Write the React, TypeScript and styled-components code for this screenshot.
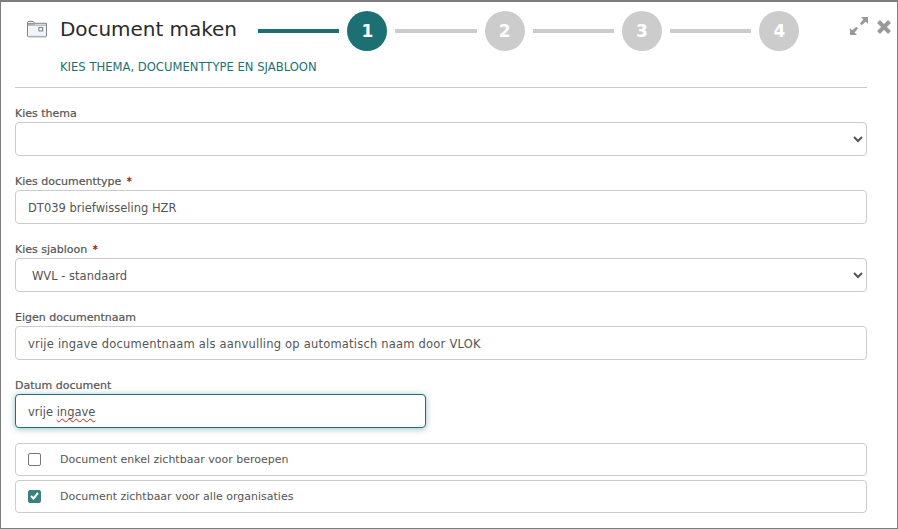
import * as React from "react";
import styled, { createGlobalStyle } from "styled-components";

const GlobalStyle = createGlobalStyle`
  html, body {
    margin: 0;
    padding: 0;
    background: #fff;
  }

  body {
    font-family: "DejaVu Sans", Verdana, sans-serif;
    color: #333;
  }
`;

const Panel = styled.div`
  box-sizing: border-box;
  width: 898px;
  height: 529px;
  padding: 0 30px 0 14px;
  border: 1px solid #7d7d7d;
  border-top-width: 2px;
  background: #fff;
  position: relative;
`;

const Header = styled.header`
  height: 85px;
  border-bottom: 1px solid #ccc;
  box-sizing: content-box;
`;

const TitleRow = styled.div`
  display: flex;
  align-items: flex-start;
  padding: 9px 0 0 12px;
`;

const FolderIcon = styled.svg`
  width: 20px;
  height: 18px;
  margin: 9px 13px 0 0;
  flex: none;
`;

const Title = styled.h1`
  width: 198px;
  margin: 3px 0 0;
  font-size: 20px;
  letter-spacing: -0.05px;
  line-height: 30px;
  font-weight: 400;
  color: #2b2b2b;
  white-space: nowrap;
`;

const Stepper = styled.div`
  display: flex;
  align-items: center;
  gap: 8px;
`;

const StepLine = styled.div<{ $active?: boolean }>`
  width: 81.33px;
  height: 4px;
  background: ${(p) => (p.$active ? "#1c7074" : "#ccc")};
`;

const StepCircle = styled.div<{ $active?: boolean }>`
  width: 40px;
  height: 40px;
  border-radius: 50%;
  display: flex;
  align-items: center;
  justify-content: center;
  background: ${(p) => (p.$active ? "#1c7074" : "#ccc")};
  color: #fff;
  font-size: 17px;
  font-weight: 700;
`;

const Subtitle = styled.div`
  margin: 8px 0 0 45px;
  font-size: 11.6px;
  line-height: 16px;
  color: #1c7074;
  white-space: nowrap;
`;

const WindowActions = styled.div`
  position: absolute;
  top: 15px;
  right: 6px;
  display: flex;
  align-items: center;
  gap: 9px;
`;

const CloseIcon = styled.svg`
  margin-top: 2px;
`;

const Form = styled.div`
  display: flex;
  flex-direction: column;
  padding-top: 17px;
`;

const Field = styled.div`
  height: 68px;
`;

const Label = styled.label`
  display: block;
  height: 17px;
  font-size: 11px;
  line-height: 18px;
  font-weight: 400;
  -webkit-text-stroke: 0.2px #555;
  color: #555;
`;

const Required = styled.span`
  margin-left: 2px;
  font-size: 10px;
  color: #a5141e;
  -webkit-text-stroke: 0.3px #a5141e;
`;

const controlStyles = `
  display: block;
  box-sizing: border-box;
  width: 100%;
  height: 34px;
  border: 1px solid #ccc;
  border-radius: 4px;
  background: #fff;
  font-family: "DejaVu Sans", Verdana, sans-serif;
  font-size: 11.5px;
  color: #555;
  outline: none;
`;

const Select = styled.select`
  ${controlStyles}
  padding: 2px 8px 0 12px;
`;

const Input = styled.input<{ $tracking?: number }>`
  ${controlStyles}
  padding: 2px 12px 0;
  letter-spacing: ${(p) => p.$tracking ?? 0}px;
`;

const FocusedInput = styled.div`
  ${controlStyles}
  width: 411px;
  padding: 0 12px;
  line-height: 34px;
  border-color: #1c7074;
  box-shadow: 0 1px 6px rgba(28, 112, 116, 0.45);
`;

const Misspelled = styled.span`
  text-decoration: underline wavy #d62020 1px;
  text-underline-offset: 2px;
`;

const CheckRows = styled.div`
  display: flex;
  flex-direction: column;
  gap: 4px;
  margin-top: -2px;
`;

const CheckRow = styled.div`
  box-sizing: border-box;
  height: 33px;
  display: flex;
  align-items: center;
  padding: 0 0 1px 12px;
  border: 1px solid #ccc;
  border-radius: 4px;
  font-size: 11px;
  color: #555;
`;

const CheckBox = styled.span<{ $checked?: boolean }>`
  box-sizing: border-box;
  width: 13px;
  height: 13px;
  margin-right: 19px;
  border-radius: 2px;
  border: 1px solid ${(p) => (p.$checked ? "#3a8080" : "#767676")};
  background: ${(p) => (p.$checked ? "#3a8080" : "#fff")};
  display: flex;
  align-items: center;
  justify-content: center;
`;

const steps = [1, 2, 3, 4];

export default function App() {
  return (
    <>
      <GlobalStyle />
      <Panel>
        <Header>
          <TitleRow>
            <FolderIcon viewBox="0 0 21 18">
              <path d="M0.5 16.5V2.5Q0.5 1 2 1H6.5L8 3H20.5V16.5Z" fill="#fff" stroke="#777" />
              <path d="M1 5H20" stroke="#777" />
              <rect x="1" y="5.5" width="19" height="10.5" fill="#eef5fb" />
              <path d="M1 3.5H8" stroke="#999" strokeWidth="2" />
              <rect x="12.5" y="7.5" width="4" height="3.5" fill="none" stroke="#777" />
              <path d="M1.5 17.5H20.5" stroke="#bbb" />
            </FolderIcon>
            <Title>Document maken</Title>
            <Stepper>
              {steps.map((n) => (
                <React.Fragment key={n}>
                  <StepLine $active={n === 1} />
                  <StepCircle $active={n === 1}>{n}</StepCircle>
                </React.Fragment>
              ))}
            </Stepper>
          </TitleRow>
          <Subtitle>KIES THEMA, DOCUMENTTYPE EN SJABLOON</Subtitle>
        </Header>
        <WindowActions>
          <svg width="18" height="18" viewBox="0 0 18 18" fill="#999">
            <path d="M18 0V7L15.8 4.8L11.6 8.2L10 6.6L13.4 2.4L11 0Z" />
            <path d="M0 18V11L2.2 13.2L6.4 9.8L8 11.4L4.6 15.6L7 18Z" />
          </svg>
          <CloseIcon width="14" height="14" viewBox="0 0 14 14" stroke="#999" strokeWidth="4">
            <path d="M1.5 1.5L12.5 12.5M12.5 1.5L1.5 12.5" />
          </CloseIcon>
        </WindowActions>
        <Form>
          <Field>
            <Label>Kies thema</Label>
            <Select defaultValue="">
              <option value="" />
            </Select>
          </Field>
          <Field>
            <Label>
              Kies documenttype <Required>*</Required>
            </Label>
            <Input readOnly value="DT039 briefwisseling HZR" />
          </Field>
          <Field>
            <Label>
              Kies sjabloon <Required>*</Required>
            </Label>
            <Select defaultValue="wvl">
              <option value="wvl">WVL - standaard</option>
            </Select>
          </Field>
          <Field>
            <Label>Eigen documentnaam</Label>
            <Input
              readOnly
              $tracking={0.21}
              value="vrije ingave documentnaam als aanvulling op automatisch naam door VLOK"
            />
          </Field>
          <Field>
            <Label>Datum document</Label>
            <FocusedInput>
              vrije <Misspelled>ingave</Misspelled>
            </FocusedInput>
          </Field>
          <CheckRows>
            <CheckRow>
              <CheckBox />
              Document enkel zichtbaar voor beroepen
            </CheckRow>
            <CheckRow>
              <CheckBox $checked>
                <svg width="9" height="8" viewBox="0 0 9 8" fill="none" stroke="#fff" strokeWidth="2">
                  <path d="M1 4L3.5 6.5L8 1" />
                </svg>
              </CheckBox>
              Document zichtbaar voor alle organisaties
            </CheckRow>
          </CheckRows>
        </Form>
      </Panel>
    </>
  );
}
